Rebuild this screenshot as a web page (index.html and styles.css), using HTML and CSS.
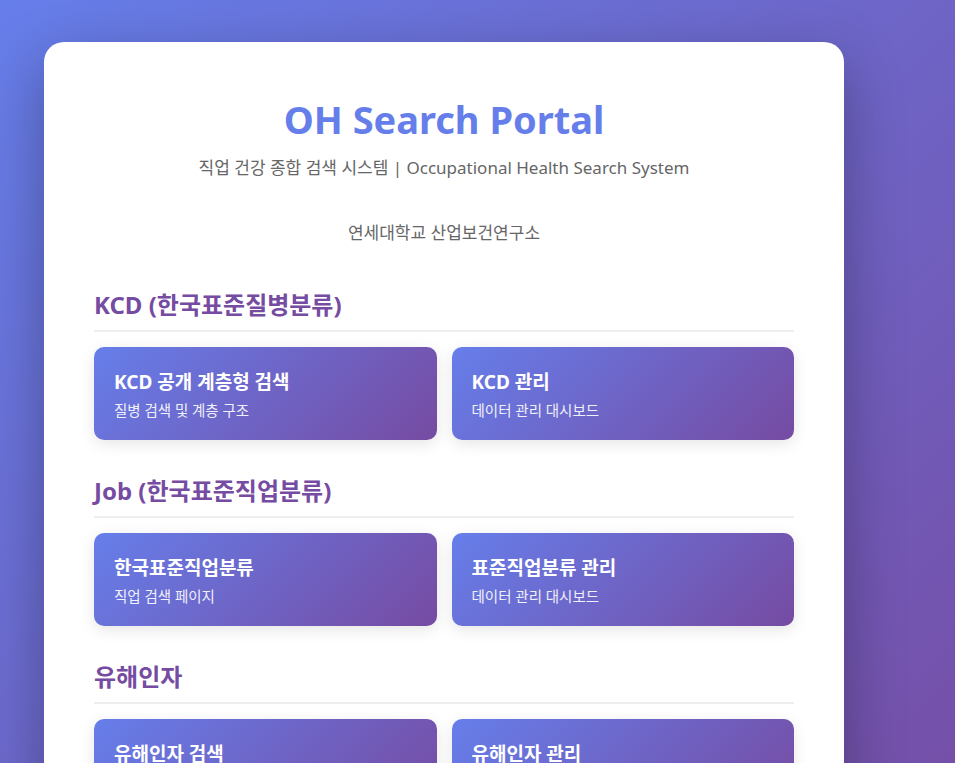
FILE: index.html
```html
<!DOCTYPE html>
<html lang="ko">
<head>
    <meta charset="UTF-8">
    <meta name="viewport" content="width=device-width, initial-scale=1.0">
    <title>OH Search Portal</title>
    <link rel="stylesheet" href="styles.css">
</head>
<body>

    <div class="container">
        <div class="header">
            <h1>OH Search Portal</h1>
            <p class="subtitle">직업 건강 종합 검색 시스템 | Occupational Health Search System</p>
            <p class="org">연세대학교 산업보건연구소</p>
        </div>

        <div class="section">
            <h2>KCD (한국표준질병분류)</h2>
            <div class="links">
                <a class="link-btn" href="#">
                    <span class="link-title">KCD 공개 계층형 검색</span>
                    <span class="link-desc">질병 검색 및 계층 구조</span>
                </a>
                <a class="link-btn" href="#">
                    <span class="link-title">KCD 관리</span>
                    <span class="link-desc">데이터 관리 대시보드</span>
                </a>
            </div>
        </div>

        <div class="section">
            <h2>Job (한국표준직업분류)</h2>
            <div class="links">
                <a class="link-btn" href="#">
                    <span class="link-title">한국표준직업분류</span>
                    <span class="link-desc">직업 검색 페이지</span>
                </a>
                <a class="link-btn" href="#">
                    <span class="link-title">표준직업분류 관리</span>
                    <span class="link-desc">데이터 관리 대시보드</span>
                </a>
            </div>
        </div>

        <div class="section">
            <h2>유해인자</h2>
            <div class="links">
                <a class="link-btn" href="#">
                    <span class="link-title">유해인자 검색</span>
                    <span class="link-desc">유해인자 검색 페이지</span>
                </a>
                <a class="link-btn" href="#">
                    <span class="link-title">유해인자 관리</span>
                    <span class="link-desc">데이터 관리 대시보드</span>
                </a>
            </div>
        </div>
    </div>

</body>
</html>
```

FILE: styles.css
```css
body {
    font-family: "Noto Sans", "Noto Sans CJK KR", sans-serif;
    background: linear-gradient(135deg, #667eea, #764ba2);
    margin: 0;
    padding: 42px 44px;
    min-height: 100vh;
}

.container {
    width: 700px;
    background: white;
    border-radius: 20px;
    padding: 53px 50px 50px;
    box-shadow: 0 20px 60px rgba(0, 0, 0, 0.3);
}

.header {
    text-align: center;
    margin-bottom: 44px;
}

h1 {
    font-size: 38px;
    line-height: 48px;
    color: #667eea;
    margin: 0 0 12px;
}

.subtitle {
    font-size: 17px;
    line-height: 25px;
    color: #666;
    margin: 0;
}

.org {
    font-size: 17px;
    line-height: 25px;
    color: #666;
    margin: 40px 0 0;
}

.section {
    margin-bottom: 35px;
}

h2 {
    font-size: 24px;
    line-height: 31px;
    color: #764ba2;
    margin: 0 0 15px;
    padding-bottom: 10px;
    border-bottom: 2px solid #eee;
}

.links {
    display: grid;
    grid-template-columns: 1fr 1fr;
    gap: 15px;
}

.link-btn {
    display: flex;
    flex-direction: column;
    padding: 23px 20px 20px;
    border-radius: 10px;
    background: linear-gradient(135deg, #667eea, #764ba2);
    color: white;
    text-decoration: none;
    box-shadow: 0 4px 15px rgba(0, 0, 0, 0.1);
}

.link-title {
    font-size: 19px;
    line-height: 25px;
    font-weight: bold;
    margin-bottom: 6px;
}

.link-desc {
    font-size: 14.5px;
    line-height: 19px;
    opacity: 0.9;
}
```
